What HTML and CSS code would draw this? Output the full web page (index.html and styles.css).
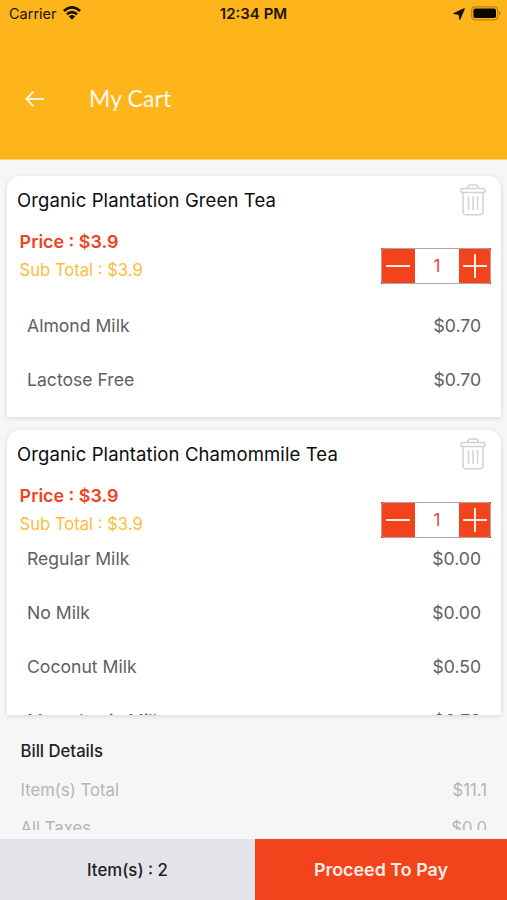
FILE: index.html
```html
<!DOCTYPE html>
<html lang="en">
<head>
<meta charset="utf-8">
<title>My Cart</title>
<link rel="stylesheet" href="styles.css">
</head>
<body>
<svg class="defs" width="0" height="0" aria-hidden="true">
  <symbol id="trash" viewBox="0 0 26 32">
    <g fill="none" stroke="#d2d2d2" stroke-width="1.5">
      <rect x="1" y="4.600" width="24" height="4" rx="1.800"/>
      <path d="M7.500 4.600Q7.800 1 10.800 1h4.400Q18.200 1 18.500 4.600M3 8.600V27.500q0 3.300 3.300 3.300h13.400q3.300 0 3.300-3.300V8.600M8.500 12.200V26.200M13 12.200V26.200M17.500 12.200V26.200"/>
    </g>
  </symbol>
</svg>
<div class="screen">
  <header class="header">
    <div class="status">
      <div class="carrier"><span>Carrier</span>
        <svg width="18" height="14" viewBox="0 0 18 14"><g fill="none" stroke="#161000" stroke-width="2.600"><path d="M.9 5Q9-2.400 17.100 5"/><path d="M3.900 8.300Q9 3.800 14.100 8.300"/></g><path d="M5.900 10.400Q9 7.800 12.100 10.400L9 13.700z" fill="#161000"/></svg>
      </div>
      <div class="clock">12:34 PM</div>
      <div class="power">
        <svg width="12" height="12" viewBox="0 0 12 12"><path d="M11.400.6L6.900 11.400 5.900 6.300.6 5.600z" fill="#161000" stroke="#161000" stroke-width="1" stroke-linejoin="round"/></svg>
        <svg width="30" height="15" viewBox="0 0 30 15"><rect x=".7" y=".8" width="26" height="13" rx="3.500" fill="none" stroke="#b9830f" stroke-width="1.200"/><rect x="2.400" y="2.600" width="22.600" height="9.400" rx="1.800" fill="#0c0800"/><path d="M28 5.200q1.600.5 1.600 2.100t-1.600 2.100z" fill="#a9780f"/></svg>
      </div>
    </div>
    <div class="nav">
      <svg width="20" height="18" viewBox="0 0 20 18"><path d="M8.500 1.600L1.400 9l7.100 7.400M1.400 9H19.200" fill="none" stroke="#fff8e4" stroke-width="1.900"/></svg>
      <h1>My Cart</h1>
    </div>
  </header>
  <main class="cart">
    <section class="card first">
      <div class="card-head"><h2>Organic Plantation Green Tea</h2><svg class="trash" width="26" height="32"><use href="#trash"/></svg></div>
      <div class="pricing">
        <div><p class="price">Price : $3.9</p><p class="sub">Sub Total : $3.9</p></div>
        <div class="stepper"><button class="minus"><i></i></button><span>1</span><button class="plus"><i></i></button></div>
      </div>
      <ul class="extras">
        <li><span>Almond Milk</span><b>$0.70</b></li>
        <li><span>Lactose Free</span><b>$0.70</b></li>
      </ul>
    </section>
    <section class="card second">
      <div class="card-head"><h2>Organic Plantation Chamommile Tea</h2><svg class="trash" width="26" height="32"><use href="#trash"/></svg></div>
      <div class="pricing">
        <div><p class="price">Price : $3.9</p><p class="sub">Sub Total : $3.9</p></div>
        <div class="stepper"><button class="minus"><i></i></button><span>1</span><button class="plus"><i></i></button></div>
      </div>
      <ul class="extras">
        <li><span>Regular Milk</span><b>$0.00</b></li>
        <li><span>No Milk</span><b>$0.00</b></li>
        <li><span>Coconut Milk</span><b>$0.50</b></li>
        <li><span>Macadamia Milk</span><b>$0.70</b></li>
      </ul>
    </section>
  </main>
  <section class="bill">
    <h3>Bill Details</h3>
    <div class="bill-row"><span>Item(s) Total</span><span>$11.1</span></div>
    <div class="bill-row"><span>All Taxes</span><span>$0.0</span></div>
  </section>
  <footer class="footer">
    <div class="count">Item(s) : 2</div>
    <div class="pay">Proceed To Pay</div>
  </footer>
</div>
</body>
</html>
```
FILE: styles.css
```css
* { box-sizing: border-box; margin: 0; padding: 0; }
body { font-family: Inter, "Liberation Sans", sans-serif; background: #f6f6f6; }
.defs { display: block; height: 0; }
.screen { width: 507px; height: 900px; display: flex; flex-direction: column; overflow: hidden; background: #f6f6f6; }
.header { height: 160px; flex: none; background: #feb41b; border-bottom: 1px solid #fdd375; }
.status { height: 28px; display: grid; grid-template-columns: 1fr auto 1fr; align-items: center; padding: 0 7px 0 9px; color: #1c1400; font-size: 14.500px; }
.carrier { display: flex; align-items: center; gap: 6px; margin-top: -1px; }
.carrier svg { margin-top: -1px; }
.clock { font-weight: 600; font-size: 15px; margin: -1px 2px 0 0; }
.power { display: flex; justify-content: flex-end; align-items: center; gap: 6px; margin: -1px -1px 0 0; }
.nav { display: flex; align-items: center; height: 40px; margin-top: 51px; padding-left: 25px; }
.nav h1 { margin: -2px 0 0 44px; font: 400 23px/40px Lato, sans-serif; letter-spacing: .1px; color: #fffaf0; }
.cart { flex: none; height: 555px; padding: 16px 6px 0 7px; display: flex; flex-direction: column; gap: 13px; }
.card { background: #fff; border-radius: 13px 13px 0 0; box-shadow: 0 1px 5px rgba(0,0,0,.13); overflow: hidden; flex: none; }
.first { height: 241px; }
.second { height: 285px; }
.card-head { height: 49px; display: flex; justify-content: space-between; align-items: center; padding: 0 15px 0 10px; }
.card-head h2 { font-size: 18.500px; letter-spacing: .12px; font-weight: 400; color: #0c0c0c; line-height: 49px; white-space: nowrap; }
.trash { display: block; margin-top: -1px; }
.pricing { height: 65px; display: flex; justify-content: space-between; padding: 3px 10px 0 12.600px; }
.price { font-size: 17.900px; font-weight: 600; line-height: 28px; color: #ee4422; }
.sub { font-size: 16.600px; line-height: 29px; color: #f9bd3b; }
.stepper { display: flex; width: 110px; height: 36px; margin-top: 20px; background: #f2431c; position: relative; }
.stepper::after { content: ""; position: absolute; inset: 0; border: 1px solid #b0a5a0; border-radius: 4px; }
.stepper button { border: 0; background: #f2431c; flex: none; display: flex; align-items: center; justify-content: center; position: relative; }
.minus { width: 34px; }
.plus { width: 32px; }
.stepper span { flex: 1; background: #fff; text-align: center; font-size: 17px; line-height: 37px; color: #df4434; }
.stepper i { display: block; width: 24px; height: 2px; background: #fff0e4; }
.plus i::after { content: ""; position: absolute; left: 15px; top: 6px; width: 2px; height: 24px; background: #fff0e4; }
.extras { list-style: none; padding: 0 20px; }
.first .extras { padding-top: 8px; }
.second .extras { margin-top: -13px; }
.extras li { height: 54px; display: flex; justify-content: space-between; align-items: center; font-size: 17.600px; color: #606060; }
.extras b { font-weight: 400; }
.bill { height: 115px; padding: 22px 20px 0 20.500px; overflow: hidden; flex: none; }
.bill h3 { font-size: 16.700px; font-weight: 500; line-height: 28px; color: #222; margin-bottom: 6px; }
.bill-row { display: flex; justify-content: space-between; font-size: 16.700px; line-height: 38px; color: #b4b4b4; }
.footer { height: 61px; margin-top: 9px; display: flex; flex: none; line-height: 62px; text-align: center; }
.count { width: 255px; background: #e4e3e9; color: #1d1d24; font-size: 16.800px; font-weight: 500; }
.pay { flex: 1; background: #f2431c; color: #ffede2; font-size: 17.900px; font-weight: 600; }
```
